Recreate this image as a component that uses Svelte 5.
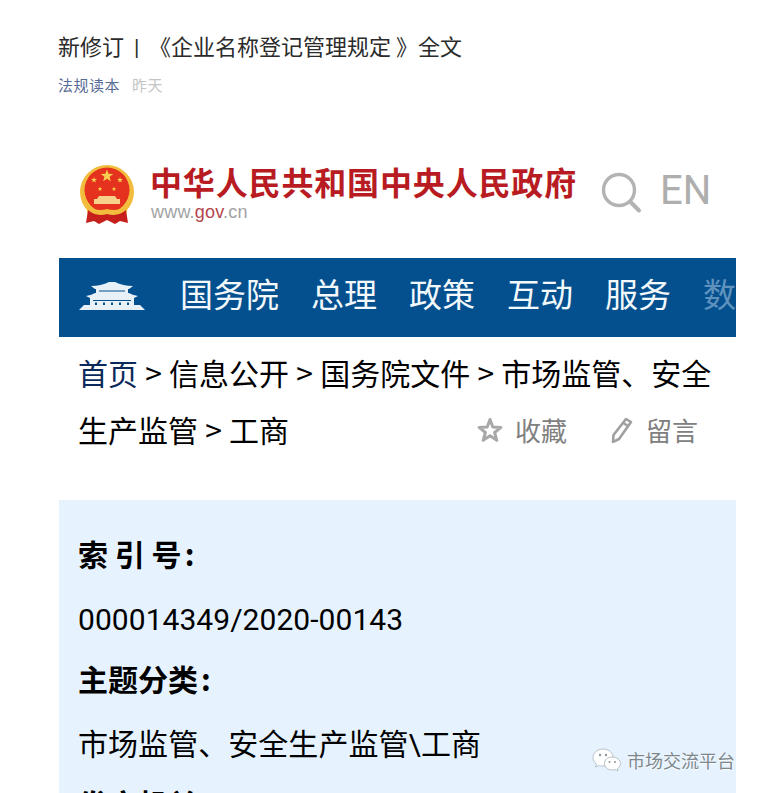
<script>
  const nav = ['国务院', '总理', '政策', '互动', '服务'];
  function starPoints(cx, cy, r) {
    let pts = [];
    for (let i = 0; i < 10; i++) {
      const rad = i % 2 ? r * 0.42 : r;
      const a = -Math.PI / 2 + (i * Math.PI) / 5;
      pts.push((cx + rad * Math.cos(a)).toFixed(1) + ',' + (cy + rad * Math.sin(a)).toFixed(1));
    }
    return pts.join(' ');
  }
</script>

<div class="page">
  <h1 class="title">新修订<span class="bar">|</span>《企业名称登记管理规定<span class="close">》</span>全文</h1>
  <div class="meta"><span class="source">法规读本</span><span class="time">昨天</span></div>

  <div class="article">
    <header class="brand">
      <svg class="emblem" width="56" height="60" viewBox="0 0 56 60">
        <circle cx="28" cy="27" r="27" fill="#f2bd3d" />
        <circle cx="28" cy="25" r="22.5" fill="#e5321f" />
        <polygon points={starPoints(28, 11, 6.5)} fill="#f6d04e" />
        <polygon points={starPoints(15, 15, 3)} fill="#f6d04e" />
        <polygon points={starPoints(41, 15, 3)} fill="#f6d04e" />
        <polygon points={starPoints(21, 24, 2.4)} fill="#f6d04e" />
        <polygon points={starPoints(35, 24, 2.4)} fill="#f6d04e" />
        <path d="M15 39 h26 v-5 h-3 l-2 -3 h-16 l-2 3 h-3 Z" fill="#f7d08a" />
        <path d="M7 41 Q18 47 28 44 Q38 47 49 41 L47 50 Q38 47 28 51 Q18 47 9 50 Z" fill="#f2bd3d" />
        <path d="M9 45 L7 58 L15 56 L20 59 L28 55 L36 59 L41 56 L49 58 L47 45 Q39 52 28 49 Q17 52 9 45 Z" fill="#c7201c" />
      </svg>
      <div class="brand-text">
        <div class="brand-name">中华人民共和国中央人民政府</div>
        <div class="brand-url">www.<b>gov</b>.cn</div>
      </div>
      <svg class="search" width="42" height="42" viewBox="0 0 42 42" fill="none" stroke="#b3b3b3">
        <circle cx="18" cy="18" r="15.5" stroke-width="3.4" />
        <path d="M29.5 30 L38 38.5" stroke-width="4" stroke-linecap="round" />
      </svg>
      <span class="en">EN</span>
    </header>

    <nav class="nav">
      <svg class="gate" width="66" height="28" viewBox="0 0 66 28">
        <g fill="#e8f1f7">
          <path d="M12 4 Q22 4 30 0 h6 Q44 4 54 4 L50 7 H16 Z" />
          <rect x="17" y="7" width="32" height="4" />
          <path d="M7 14 Q13 13 16 11 H50 Q53 13 59 14 L55 16 H11 Z" />
          <rect x="11" y="16" width="44" height="7" />
          <path d="M0 28 L5 23 H61 L66 28 Z" />
        </g>
        <g fill="#04508f">
          <rect x="20" y="8.5" width="26" height="1" />
          <rect x="14" y="18" width="38" height="1" />
          <rect x="16" y="20.5" width="2" height="2.5" />
          <rect x="24" y="20.5" width="2" height="2.5" />
          <rect x="32" y="20.5" width="2" height="2.5" />
          <rect x="40" y="20.5" width="2" height="2.5" />
          <rect x="48" y="20.5" width="2" height="2.5" />
        </g>
      </svg>
      <ul class="links">
        {#each nav as item}
          <li>{item}</li>
        {/each}
        <li class="faded">数</li>
      </ul>
    </nav>

    <div class="crumbs">
      <a href="#home">首页</a> &gt; 信息公开 &gt; 国务院文件 &gt; 市场监管、安全
      <div class="crumb-last">
        <span>生产监管 &gt; 工商</span>
        <div class="tools">
          <span class="tool">
            <svg width="26" height="26" viewBox="0 0 26 26" fill="none" stroke="#a8a8a8" stroke-width="3" stroke-linejoin="round">
              <polygon points={starPoints(13, 14, 11.5)} />
            </svg>
            收藏
          </span>
          <span class="tool">
            <svg width="24" height="26" viewBox="0 0 24 26" fill="none" stroke="#a0a0a0" stroke-width="2.6" stroke-linejoin="round">
              <path d="M16 2 L21 5 L9 22 L3 25 L3.5 18 Z" />
              <path d="M13.5 6 L18.5 9.5" />
            </svg>
            留言
          </span>
        </div>
      </div>
    </div>

    <section class="info">
      <div class="label">索 引 号<span class="colon">:</span></div>
      <div class="value">000014349/2020-00143</div>
      <div class="label">主题分类<span class="colon">:</span></div>
      <div class="value">市场监管、安全生产监管\工商</div>
      <div class="label">发文机关<span class="colon">:</span></div>
    </section>
  </div>

  <div class="watermark">
    <svg width="30" height="24" viewBox="0 0 30 24">
      <path d="M11 1 C5 1 1 5 1 9.5 C1 12 2.5 14.5 4.5 16 L3.5 19 L7.5 17.5 C9 18 10 18 12 18 C17 18 21 14 21 9.5 C21 5 17 1 11 1 Z" fill="#fff" stroke="#a9b2b8" stroke-width="0.8" />
      <path d="M20 9 C15.5 9 12.5 12 12.5 15.5 C12.5 19 15.5 22 20 22 C21 22 22 22 23 21.5 L26 23 L25.5 20.5 C27.5 19 28.5 17.5 28.5 15.5 C28.5 12 25 9 20 9 Z" fill="#fff" stroke="#a9b2b8" stroke-width="0.8" />
      <circle cx="8" cy="7" r="1.2" fill="#8c969c" />
      <circle cx="14" cy="7" r="1.2" fill="#8c969c" />
      <circle cx="17.5" cy="14" r="1" fill="#8c969c" />
      <circle cx="23" cy="14" r="1" fill="#8c969c" />
    </svg>
    <span>市场交流平台</span>
  </div>
</div>

<style>
  :global(body) {
    margin: 0;
    background: #fff;
    overflow: hidden;
  }
  .page {
    position: relative;
    width: 759px;
    height: 793px;
    overflow: hidden;
    box-sizing: border-box;
    padding: 33px 23px 0 59px;
    font-family: Roboto, "Noto Sans CJK SC", sans-serif;
    color: #000;
  }
  .title {
    margin: 0 0 0 -1px;
    font-size: 22px;
    font-weight: 400;
    line-height: 30px;
    color: #2b2b2b;
    white-space: nowrap;
  }
  .bar {
    display: inline-block;
    width: 25px;
    box-sizing: border-box;
    padding-left: 10px;
  }
  .close {
    margin-left: 5px;
  }
  .meta {
    margin: 11px 0 0 -1px;
    display: flex;
    gap: 12px;
    font-size: 15px;
    line-height: 24px;
    letter-spacing: 0.5px;
  }
  .source {
    color: #576b95;
  }
  .time {
    color: #c4c4c4;
  }
  .article {
    margin-top: 43px;
  }
  .brand {
    display: flex;
    align-items: flex-start;
    height: 117px;
    box-sizing: border-box;
    padding: 22px 0 0 20px;
  }
  .emblem {
    flex: none;
    margin-top: 2px;
  }
  .brand-text {
    margin-left: 16px;
    width: 434px;
    flex: none;
  }
  .brand-name {
    margin-left: -1px;
    font-family: "Noto Sans CJK SC", sans-serif;
    font-size: 32px;
    font-weight: 700;
    line-height: 36px;
    letter-spacing: 0.85px;
    color: #b81c22;
    white-space: nowrap;
  }
  .brand-url {
    font-family: "Liberation Sans", sans-serif;
    font-size: 18px;
    line-height: 20px;
    letter-spacing: 0.2px;
    margin-top: 3px;
    color: #a2a2a4;
  }
  .brand-url b {
    font-weight: 400;
    color: #b4454c;
  }
  .search {
    flex: none;
    margin: 9px 0 0 16px;
  }
  .en {
    margin: 3px 0 0 17px;
    font-size: 40px;
    line-height: 50px;
    color: #aeaeae;
  }
  .nav {
    display: flex;
    align-items: center;
    height: 79px;
    box-sizing: border-box;
    padding-bottom: 5px;
    background: #04508f;
    overflow: hidden;
  }
  .gate {
    flex: none;
    margin: 2px 0 0 20px;
  }
  .links {
    display: flex;
    gap: 32px;
    margin: 0 0 3px 35px;
    padding: 0;
    list-style: none;
    font-family: "Noto Sans CJK SC", sans-serif;
    font-size: 33px;
    line-height: 71px;
    color: #f2f8fb;
    white-space: nowrap;
  }
  .faded {
    color: #5f93bd;
  }
  .crumbs {
    padding: 7px 0 0 19px;
    height: 163px;
    box-sizing: border-box;
    font-size: 30px;
    line-height: 57px;
    word-spacing: 0.5px;
    white-space: nowrap;
    font-family: "Noto Sans CJK SC", sans-serif;
  }
  .crumbs a {
    color: #0b2a5c;
    text-decoration: none;
  }
  .crumb-last {
    display: flex;
    justify-content: space-between;
    padding-right: 38px;
  }
  .tools {
    display: flex;
    gap: 43px;
    font-size: 26px;
    color: #808080;
  }
  .tool {
    display: flex;
    align-items: center;
    gap: 12px;
  }
  .info {
    background: #e6f3ff;
    padding: 26px 20px 0 19px;
    height: 400px;
    box-sizing: border-box;
    font-size: 30px;
    line-height: 62.5px;
  }
  .label {
    height: 62.5px;
    line-height: 55px;
    font-weight: 700;
    font-family: "Noto Sans CJK SC", sans-serif;
  }
  .colon {
    margin-left: 3px;
  }
  .value {
    white-space: nowrap;
    letter-spacing: 0.05px;
  }
  .watermark {
    position: absolute;
    right: 24px;
    top: 748px;
    display: flex;
    align-items: center;
    gap: 5px;
    font-family: "Noto Sans CJK SC", sans-serif;
    font-size: 18px;
    line-height: 24px;
    color: #7d868c;
    text-shadow: 0 1px 1px #fff;
  }
</style>
